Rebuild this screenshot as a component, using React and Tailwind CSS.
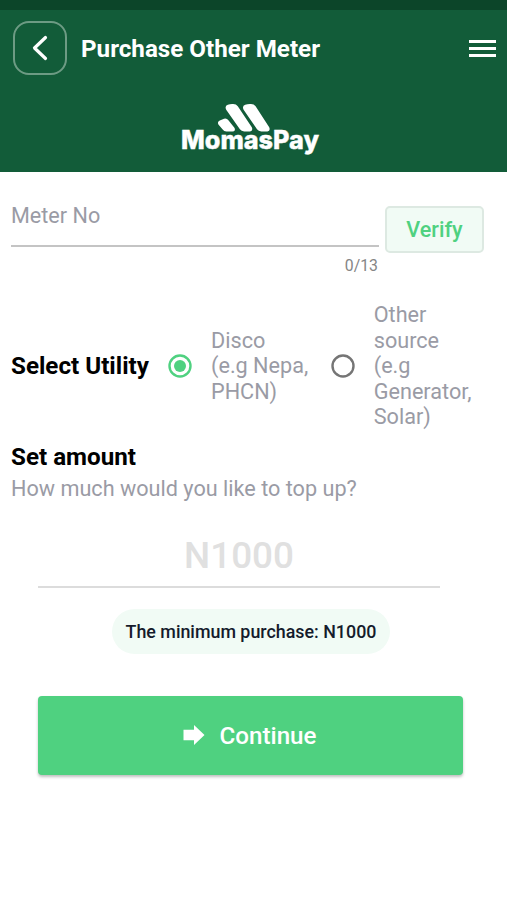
import { useState } from "react";

// ─── Logo ────────────────────────────────────────────────────────────────────
function Logo() {
  return (
    <svg viewBox="0 0 140 54" className="h-[54px] w-[140px]" fill="#fff">
      <path d="M38.400 20.500 Q37 17.600 39.800 16.400 L44 14.700 Q46.800 14 48.400 16.200 L54.600 24 Q55.800 27.200 52.600 27.500 H46.400 Q44 27.400 42.700 25.600 Z" />
      <path d="M46.200 5.800 Q44.400 2 47.800 0.800 Q50.500 -0.100 53.200 0 Q56.200 0 57.800 2.200 L71.800 23.200 Q73.300 26.800 70 27.400 H64.200 Q61.400 27.300 59.900 25.200 Z" />
      <path d="M63.600 5.800 Q61.800 2 65.200 0.800 Q67.900 -0.100 71 0 Q74 0 75.600 2.200 L89.200 23.200 Q90.700 26.800 87.400 27.400 H81.300 Q78.500 27.300 77 25.200 Z" />
      <text x="1" y="45" textLength="138" lengthAdjust="spacingAndGlyphs" className="font-['Inter',sans-serif] text-[25.500px] font-extrabold" stroke="#fff" strokeWidth="0.400">
        MomasPay
      </text>
    </svg>
  );
}

// ─── Header ──────────────────────────────────────────────────────────────────
function Header() {
  return (
    <header className="h-[172px] bg-[#125c39] text-white">
      <div className="h-[10px] bg-[#0c4529]" />
      <div className="flex h-[76px] items-center pl-[13px] pr-[11px]">
        <button type="button" aria-label="Back" className="flex size-[54px] items-center justify-center rounded-[16px] border-2 border-[#6d9b84]">
          <svg viewBox="0 0 16 26" className="h-[26px] w-4" fill="none" stroke="#fff" strokeWidth="3.200" strokeLinecap="round" strokeLinejoin="round">
            <path d="M13.500 2.500 L2.500 13 L13.500 23.500" />
          </svg>
        </button>
        <h1 className="ml-[14px] pt-px text-[24.200px] leading-7 font-bold whitespace-nowrap">Purchase Other Meter</h1>
        <button type="button" aria-label="Menu" className="ml-auto flex w-[27px] flex-col gap-[4px]">
          <span className="h-[3px] bg-white" />
          <span className="h-[3px] bg-white" />
          <span className="h-[3px] bg-white" />
        </button>
      </div>
      <div className="flex justify-center pt-[18px] pr-[8px]">
        <Logo />
      </div>
    </header>
  );
}

// ─── Radio Option ────────────────────────────────────────────────────────────
function RadioOption({ lines, checked, onSelect }) {
  return (
    <button type="button" onClick={onSelect} className="flex items-center gap-[19px] text-left">
      <svg viewBox="0 0 24 24" className="mb-px size-6 shrink-0">
        <circle cx="12" cy="12" r="10.500" fill="none" stroke={checked ? "#4fd180" : "#757575"} strokeWidth="2.400" />
        {checked && <circle cx="12" cy="12" r="6" fill="#4fd180" />}
      </svg>
      <span className="text-[21.650px] leading-[25.500px] whitespace-nowrap text-[#9a9ba5]">
        {lines.map((line) => (
          <span key={line} className="block">{line}</span>
        ))}
      </span>
    </button>
  );
}

const utilities = [
  { id: "disco", lines: ["Disco", "(e.g Nepa,", "PHCN)"] },
  { id: "other", lines: ["Other", "source", "(e.g", "Generator,", "Solar)"] },
];

// ─── Main Page ───────────────────────────────────────────────────────────────
export default function App() {
  const [utility, setUtility] = useState("disco");

  return (
    <main className="h-[900px] w-[507px] overflow-hidden bg-white font-['Roboto',sans-serif]">
      <Header />

      {/* Meter number */}
      <section className="flex h-[130px] items-start pl-[11px] pt-[30px]">
        <div className="w-[368px]">
          <div className="h-[45px] border-b-2 border-[#c4c4c4] text-[21.600px] leading-[27px] text-[#9a9ba5]">Meter No</div>
          <p className="pt-[9px] pr-px text-right text-[15.800px] leading-5 text-[#858585]">0/13</p>
        </div>
        <button type="button" className="ml-[6px] mt-[4px] h-[47px] w-[99px] rounded-[5px] border-2 border-[#dde9e2] bg-[#f1fbf5] pt-[2px] text-[21.600px] font-medium text-[#4fd180]">
          Verify
        </button>
      </section>

      {/* Utility */}
      <section className="flex h-[128px] items-center pl-[11px]">
        <h2 className="w-[157px] text-[24.200px] font-bold whitespace-nowrap text-black">Select Utility</h2>
        <div className="flex gap-[22.500px]">
          {utilities.map((u) => (
            <RadioOption key={u.id} lines={u.lines} checked={utility === u.id} onSelect={() => setUtility(u.id)} />
          ))}
        </div>
      </section>

      {/* Amount */}
      <section className="pl-[11px] pt-[13px]">
        <h2 className="text-[24.200px] leading-7 font-bold text-black">Set amount</h2>
        <p className="pt-[5px] text-[21.650px] leading-[26px] text-[#9a9ba5]">How much would you like to top up?</p>
      </section>
      <section className="flex flex-col pl-[38px]">
        <div className="mt-[26px] h-[60px] w-[402px] border-b-2 border-[#dcdcdc] text-center text-[36.800px] leading-[56px] font-medium text-[#e0e0e0]">
          N1000
        </div>
        <p className="ml-[74px] mt-[21px] flex h-[45px] w-[278px] items-center justify-center rounded-full bg-[#f1fbf5] pt-[2px] text-[17.850px] font-medium whitespace-nowrap text-[#151b2c]">
          The minimum purchase: N1000
        </p>
        <button type="button" className="mt-[42px] flex h-[79px] w-[425px] items-center justify-center gap-[14px] rounded-[4px] bg-[#4fd180] pr-px text-[24.200px] font-medium text-white shadow-[0_2px_3px_rgba(0,0,0,0.25)]">
          <svg viewBox="0 0 22 20" className="mb-px h-5 w-[22px]" fill="#fff">
            <path d="M0.500 4.800 H11 V0 L21.500 10 L11 20 V15.200 H0.500 Z" />
          </svg>
          <span className="pt-px">Continue</span>
        </button>
      </section>
    </main>
  );
}
